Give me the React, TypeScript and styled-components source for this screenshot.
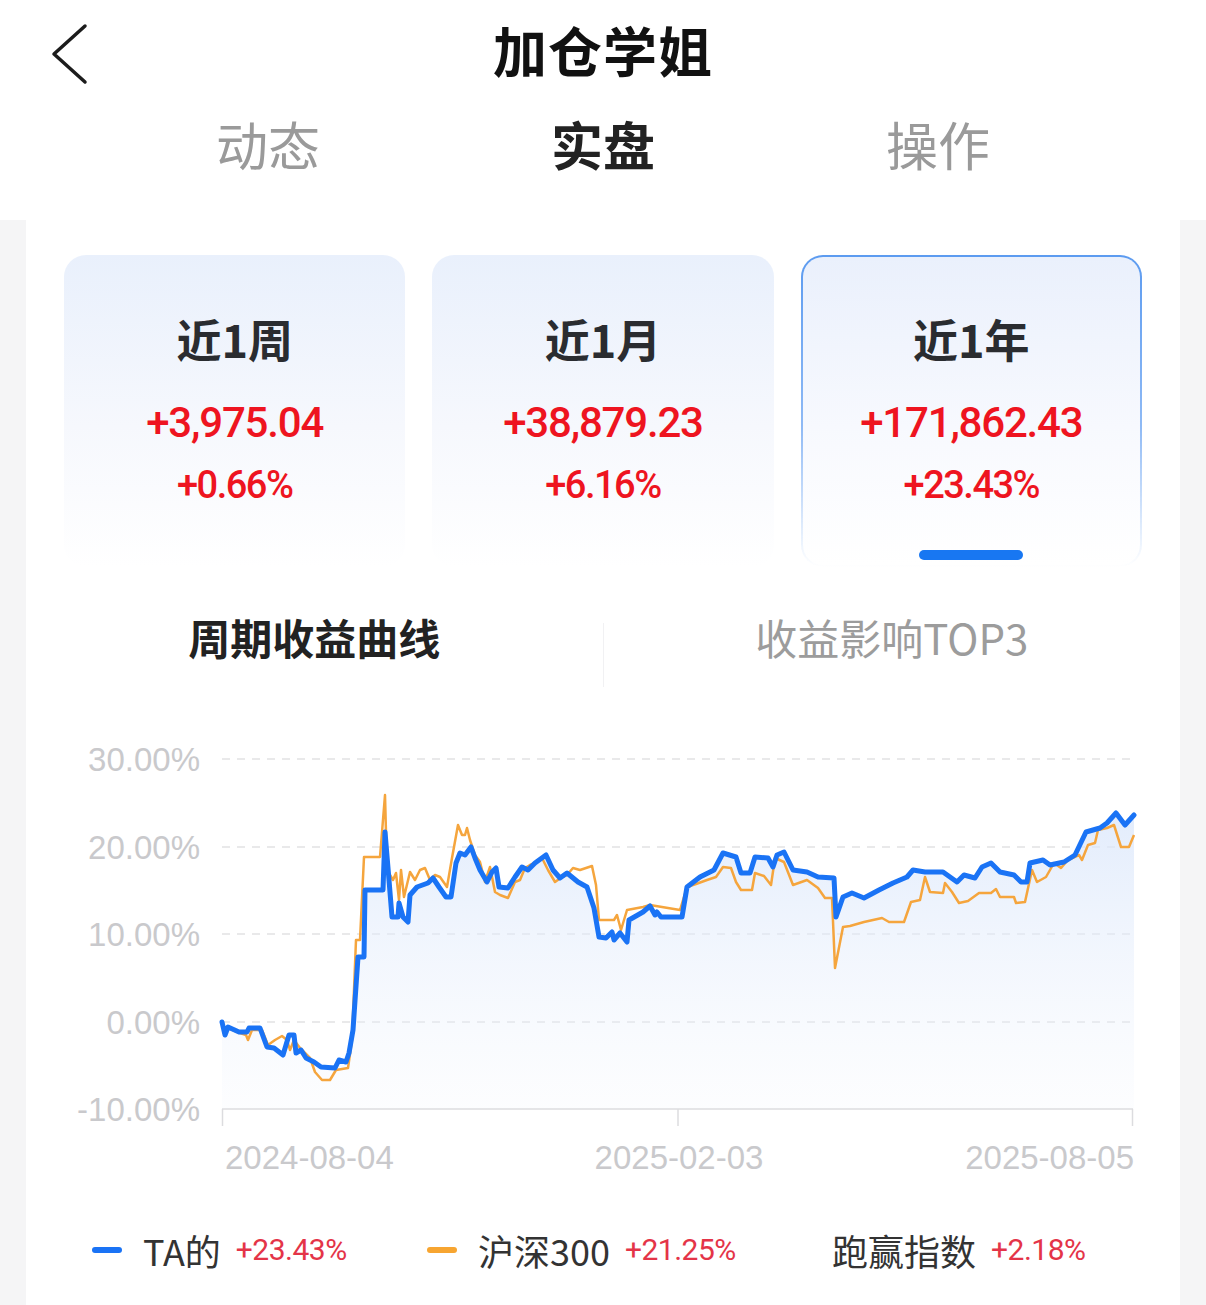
import React from "react";
import styled, { createGlobalStyle } from "styled-components";

const GlobalStyle = createGlobalStyle`
  html, body {
    margin: 0;
    padding: 0;
    background: #f5f5f6;
    font-family: "Noto Sans CJK SC", "Noto Sans", sans-serif;
  }
`;

interface Period {
  label: string;
  amount: string;
  rate: string;
  active?: boolean;
}

const periods: Period[] = [
  { label: "近1周", amount: "+3,975.04", rate: "+0.66%" },
  { label: "近1月", amount: "+38,879.23", rate: "+6.16%" },
  { label: "近1年", amount: "+171,862.43", rate: "+23.43%", active: true },
];

// chart points, page coordinates
const blue =
  "222,1022 225,1035 228,1027 239,1032 247,1032 249,1028 260,1028 267,1047 274,1048 283,1055 289,1035 294,1035 296,1053 301,1050 306,1058 314,1062 321,1067 335,1068 339,1060 346,1062 349,1053 353,1030 358,957 364,957 365,890 383,890 385,832 389,880 392,917 398,917 399,903 403,917 408,922 410,895 417,887 428,883 433,878 439,887 446,897 451,897 456,863 460,853 465,855 471,847 475,858 480,870 487,882 492,872 496,868 499,887 508,888 515,877 522,867 528,870 535,863 546,855 553,870 560,878 567,873 578,882 587,887 594,908 599,937 606,938 612,932 614,940 620,933 627,942 629,920 643,912 650,906 655,915 657,912 661,917 682,917 687,887 700,877 714,870 723,853 736,857 741,873 750,873 755,857 768,858 773,867 777,855 784,852 793,870 807,872 818,877 834,878 836,917 843,897 852,893 864,898 879,890 893,883 907,877 913,870 925,872 943,872 957,882 964,875 975,878 982,867 991,863 1000,872 1014,875 1021,882 1027,882 1030,863 1043,860 1050,865 1064,862 1075,855 1086,832 1100,828 1107,823 1116,813 1125,825 1134,815";

const orange =
  "222,1022 225,1030 228,1028 240,1033 246,1035 248,1040 252,1030 262,1030 268,1045 275,1040 282,1036 287,1040 290,1050 294,1040 300,1048 310,1058 315,1072 322,1080 330,1080 336,1070 348,1068 352,1040 356,940 360,940 364,857 380,857 385,795 387,870 393,880 396,873 399,900 401,870 404,897 410,872 415,880 420,870 425,868 430,880 435,875 440,877 447,887 452,858 458,825 462,835 465,835 467,828 470,840 475,855 480,862 485,882 490,867 495,892 500,895 508,898 515,882 520,880 525,868 530,865 537,862 542,858 548,870 555,882 562,877 567,875 573,868 580,870 592,866 596,885 599,920 614,920 617,915 621,930 627,910 643,907 650,905 680,910 687,887 696,884 707,880 716,877 723,867 731,868 736,882 741,890 752,890 755,873 764,876 771,885 775,858 784,862 793,885 807,880 818,888 825,898 832,898 835,968 843,927 850,926 864,922 882,918 889,922 904,922 911,902 920,900 925,877 930,892 943,893 945,883 952,892 959,903 968,901 979,893 991,893 996,889 1000,897 1014,897 1016,903 1025,902 1032,870 1037,882 1046,877 1054,863 1061,868 1068,860 1079,855 1082,860 1088,845 1095,843 1098,830 1107,828 1114,825 1121,847 1129,847 1134,835";

const toPath = (pts: string) => "M" + pts.split(" ").join(" L");

const gridRows = [
  { y: 759, label: "30.00%" },
  { y: 847, label: "20.00%" },
  { y: 934, label: "10.00%" },
  { y: 1022, label: "0.00%" },
  { y: 1109, label: "-10.00%" },
];

const App: React.FC = () => {
  return (
    <>
      <GlobalStyle />
      <Header>
        <TopBar>
          <BackButton>
            <svg width="40" height="64" viewBox="0 0 40 64">
              <polyline
                points="35,4 4,32 35,60"
                fill="none"
                stroke="#1c1c1c"
                strokeWidth="3.5"
                strokeLinecap="round"
                strokeLinejoin="round"
              />
            </svg>
          </BackButton>
          <Title>加仓学姐</Title>
        </TopBar>
        <Tabs>
          <Tab>动态</Tab>
          <Tab $active>实盘</Tab>
          <Tab>操作</Tab>
        </Tabs>
      </Header>

      <Panel>
        <Cards>
          {periods.map((p) => (
            <Card key={p.label} $active={p.active}>
              <CardTitle>{p.label}</CardTitle>
              <Amount>{p.amount}</Amount>
              <Rate>{p.rate}</Rate>
              {p.active && <Indicator />}
            </Card>
          ))}
        </Cards>

        <ChartTabs>
          <ChartTab $active>周期收益曲线</ChartTab>
          <ChartDivider />
          <ChartTab>收益影响TOP3</ChartTab>
        </ChartTabs>

        <ChartBox>
          <svg width="1154" height="460" viewBox="26 730 1154 460">
            <defs>
              <linearGradient id="area" x1="0" y1="0" x2="0" y2="1">
                <stop offset="0%" stopColor="#d9e6fb" stopOpacity="0.75" />
                <stop offset="100%" stopColor="#eef3fc" stopOpacity="0.15" />
              </linearGradient>
            </defs>
            {gridRows.map((r, i) => (
              <g key={r.label}>
                {i < gridRows.length - 1 && (
                  <line
                    x1="222"
                    x2="1130"
                    y1={r.y}
                    y2={r.y}
                    stroke="#e2e2e4"
                    strokeWidth="1.5"
                    strokeDasharray="8 7"
                  />
                )}
                <AxisText x="200" y={r.y + 12} textAnchor="end">
                  {r.label}
                </AxisText>
              </g>
            ))}
            <path d={toPath(blue) + " L1134,1109 L222,1109 Z"} fill="url(#area)" />
            <line x1="222" x2="1133" y1="1109" y2="1109" stroke="#dcdcdf" strokeWidth="1.5" />
            {[222.5, 678, 1132.5].map((x) => (
              <line key={x} x1={x} x2={x} y1="1109" y2="1126" stroke="#dcdcdf" strokeWidth="1.5" />
            ))}
            <path
              d={toPath(orange)}
              fill="none"
              stroke="#f5a53d"
              strokeWidth="2.5"
              strokeLinejoin="round"
            />
            <path
              d={toPath(blue)}
              fill="none"
              stroke="#1a73f5"
              strokeWidth="5"
              strokeLinejoin="round"
              strokeLinecap="round"
            />
            <AxisText x="225" y="1169">
              2024-08-04
            </AxisText>
            <AxisText x="679" y="1169" textAnchor="middle">
              2025-02-03
            </AxisText>
            <AxisText x="1134" y="1169" textAnchor="end">
              2025-08-05
            </AxisText>
          </svg>
        </ChartBox>

        <Legend>
          <LegendItem>
            <Swatch $color="#1a73f5" />
            <LegendName>TA的</LegendName>
            <LegendValue>+23.43%</LegendValue>
          </LegendItem>
          <LegendItem>
            <Swatch $color="#f7a531" />
            <LegendName>沪深300</LegendName>
            <LegendValue>+21.25%</LegendValue>
          </LegendItem>
          <LegendItem>
            <LegendName>跑赢指数</LegendName>
            <LegendValue>+2.18%</LegendValue>
          </LegendItem>
        </Legend>
      </Panel>
    </>
  );
};

const Header = styled.div`
  background: #ffffff;
  height: 220px;
`;
const TopBar = styled.div`
  position: relative;
  height: 100px;
  display: flex;
  align-items: center;
  justify-content: center;
`;
const BackButton = styled.div`
  position: absolute;
  left: 50px;
  top: 22px;
  width: 40px;
  height: 64px;
`;
const Title = styled.div`
  font-size: 54px;
  line-height: 54px;
  font-weight: 700;
  color: #111111;
  letter-spacing: 1px;
`;
const Tabs = styled.div`
  display: flex;
  justify-content: center;
  padding-top: 18px;
`;
const Tab = styled.div<{ $active?: boolean }>`
  width: 335px;
  text-align: center;
  font-size: 52px;
  line-height: 52px;
  font-weight: ${(p) => (p.$active ? 700 : 400)};
  color: ${(p) => (p.$active ? "#222222" : "#9a9a9a")};
`;

const Panel = styled.div`
  margin: 0 26px;
  background: #ffffff;
  min-height: 1085px;
  padding-top: 35px;
`;
const Cards = styled.div`
  display: grid;
  grid-template-columns: repeat(3, 1fr);
  gap: 27px;
  padding: 0 38px;
`;
const Card = styled.div<{ $active?: boolean }>`
  height: 312px;
  box-sizing: border-box;
  border-radius: 22px;
  display: flex;
  flex-direction: column;
  align-items: center;
  padding-top: ${(p) => (p.$active ? 59 : 61)}px;
  border: ${(p) => (p.$active ? "2px solid transparent" : "none")};
  background: ${(p) =>
    p.$active
      ? "linear-gradient(180deg, #eaf0fc 0%, #f7f9fe 55%, #ffffff 100%) padding-box, linear-gradient(180deg, #5c9bf0 0%, #8fbaf5 55%, rgba(200,220,250,0) 100%) border-box"
      : "linear-gradient(180deg, #e9f0fc 0%, #f6f8fd 55%, #ffffff 100%)"};
`;
const CardTitle = styled.div`
  font-size: 45px;
  line-height: 45px;
  font-weight: 700;
  color: #2a2c30;
`;
const Amount = styled.div`
  margin-top: 41px;
  font-family: Roboto, "Liberation Sans", sans-serif;
  font-size: 42px;
  line-height: 42px;
  font-weight: 500;
  letter-spacing: -1.2px;
  color: #ee1420;
`;
const Rate = styled.div`
  margin-top: 22px;
  font-family: Roboto, "Liberation Sans", sans-serif;
  font-size: 38px;
  line-height: 38px;
  font-weight: 500;
  letter-spacing: -1.5px;
  color: #ee1420;
`;
const Indicator = styled.div`
  margin-top: 46px;
  width: 104px;
  height: 10px;
  border-radius: 5px;
  background: #1877f2;
`;

const ChartTabs = styled.div`
  display: flex;
  align-items: flex-start;
  margin-top: 45px;
  height: 75px;
`;
const ChartTab = styled.div<{ $active?: boolean }>`
  flex: 1;
  text-align: center;
  font-size: 42px;
  line-height: 50px;
  font-weight: ${(p) => (p.$active ? 700 : 400)};
  color: ${(p) => (p.$active ? "#222222" : "#9c9c9c")};
`;
const ChartDivider = styled.div`
  width: 1px;
  height: 64px;
  margin-top: 11px;
  background: #f1f1f3;
`;
const ChartBox = styled.div`
  margin-top: 43px;
  height: 460px;
  svg {
    display: block;
  }
`;
const AxisText = styled.text`
  font-family: "Liberation Sans", Arial, sans-serif;
  font-size: 33px;
  fill: #c9c9cc;
`;

const Legend = styled.div`
  display: grid;
  grid-template-columns: 335px 405px auto;
  padding-left: 66px;
  margin-top: 40px;
`;
const LegendItem = styled.div`
  display: flex;
  align-items: center;
  height: 40px;
`;
const Swatch = styled.div<{ $color: string }>`
  width: 30px;
  height: 6px;
  border-radius: 3px;
  background: ${(p) => p.$color};
  margin-right: 21px;
`;
const LegendName = styled.span`
  font-size: 36px;
  line-height: 40px;
  color: #333333;
  margin-right: 15px;
`;
const LegendValue = styled.span`
  font-family: Roboto, "Liberation Sans", sans-serif;
  font-size: 30px;
  line-height: 40px;
  letter-spacing: -0.5px;
  color: #e43448;
`;

export default App;
